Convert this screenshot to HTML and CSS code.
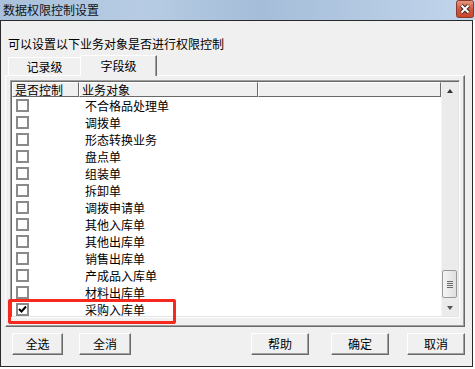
FILE: index.html
```html
<!DOCTYPE html>
<html lang="zh-CN">
<head>
    <meta charset="utf-8">
    <link rel="stylesheet" href="styles.css">
</head>
<body>
<div class="dialog">
    <div class="titlebar">
        <span class="title">数据权限控制设置</span>
        <svg class="close" width="18" height="18" viewBox="0 0 18 18">
            <defs>
                <linearGradient id="red" x1="0" y1="0" x2="0" y2="1">
                    <stop offset="0" stop-color="#e59a86"/>
                    <stop offset="0.5" stop-color="#d0583d"/>
                    <stop offset="1" stop-color="#c8452b"/>
                </linearGradient>
            </defs>
            <rect x="0.5" y="0.5" width="17" height="17" rx="2" fill="url(#red)" stroke="#8a3a2a"/>
            <path d="M5.5 5.5 L12.5 12.5 M12.5 5.5 L5.5 12.5" stroke="#3a2a2a" stroke-width="4"/>
            <path d="M5.5 5.5 L12.5 12.5 M12.5 5.5 L5.5 12.5" stroke="#fff" stroke-width="2"/>
        </svg>
    </div>
    <div class="frame">
        <div class="caption">可以设置以下业务对象是否进行权限控制</div>
        <div class="tabs">
            <div class="tab">记录级</div>
            <div class="tab active">字段级</div>
        </div>
        <div class="panel">
            <div class="list">
                <div class="grid">
                    <div class="header">
                        <div class="col c1">是否控制</div>
                        <div class="col c2">业务对象</div>
                        <div class="col c3"></div>
                    </div>
                    <div class="row"><span class="check"></span><span class="name">不合格品处理单</span></div>
                    <div class="row"><span class="check"></span><span class="name">调拨单</span></div>
                    <div class="row"><span class="check"></span><span class="name">形态转换业务</span></div>
                    <div class="row"><span class="check"></span><span class="name">盘点单</span></div>
                    <div class="row"><span class="check"></span><span class="name">组装单</span></div>
                    <div class="row"><span class="check"></span><span class="name">拆卸单</span></div>
                    <div class="row"><span class="check"></span><span class="name">调拨申请单</span></div>
                    <div class="row"><span class="check"></span><span class="name">其他入库单</span></div>
                    <div class="row"><span class="check"></span><span class="name">其他出库单</span></div>
                    <div class="row"><span class="check"></span><span class="name">销售出库单</span></div>
                    <div class="row"><span class="check"></span><span class="name">产成品入库单</span></div>
                    <div class="row"><span class="check"></span><span class="name">材料出库单</span></div>
                    <div class="row last">
                        <span class="check">
                            <svg width="9" height="9" viewBox="0 0 9 9"><path d="M1 4 L3.5 6.5 L8 1.5" fill="none" stroke="#000" stroke-width="2"/></svg>
                        </span>
                        <span class="name">采购入库单</span>
                    </div>
                </div>
                <div class="scrollbar">
                    <div class="arrow"><span class="tri up"></span></div>
                    <div class="track"></div>
                    <div class="thumb"><span class="grip"></span></div>
                    <div class="arrow"><span class="tri down"></span></div>
                </div>
            </div>
        </div>
        <div class="buttons">
            <div class="btn b-all">全选</div>
            <div class="btn b-none">全消</div>
            <div class="btn b-help">帮助</div>
            <div class="btn b-ok">确定</div>
            <div class="btn b-cancel">取消</div>
        </div>
    </div>
    <div class="highlight"></div>
</div>
</body>
</html>
```

FILE: styles.css
```css
body {
    margin: 0;
    background: #fff;
    font-family: "Noto Sans CJK SC", "Noto Sans", sans-serif;
    font-size: 12px;
    color: #000;
}
.dialog {
    position: relative;
    width: 475px;
    height: 369px;
}
.titlebar {
    height: 20px;
    display: flex;
    justify-content: space-between;
    align-items: flex-start;
    background: linear-gradient(to right, #a9c1dc 0%, #b7cce4 30%, #a5bdd9 55%, #c2d6ec 100%);
}
.title {
    padding: 2px 0 0 3px;
    line-height: 16px;
    color: #101418;
}
.close {
    margin-right: 1px;
    display: block;
}
.frame {
    box-sizing: border-box;
    width: 473px;
    height: 347px;
    border: 1px solid #2a2a2a;
    background: #f0f0f0;
}
.caption {
    margin: 16px 0 0 7px;
    line-height: 14px;
    height: 14px;
}
.tabs {
    display: flex;
    align-items: flex-end;
    height: 20px;
    margin: 4px 0 0 7px;
}
.tab {
    box-sizing: border-box;
    height: 18px;
    width: 72px;
    text-align: center;
    line-height: 17px;
    border-top: 1px solid #fff;
    border-left: 1px solid #fff;
    background: #f0f0f0;
}
.tab.active {
    position: relative;
    z-index: 1;
    width: 77px;
    height: 21px;
    margin-bottom: -1px;
    line-height: 19px;
    border-right: 1px solid #696969;
    box-shadow: inset -1px 0 #a0a0a0;
}
.panel {
    box-sizing: border-box;
    width: 460px;
    height: 252px;
    margin-left: 4px;
    padding: 4px 0 0 4px;
    border-top: 1px solid #fff;
    border-left: 1px solid #fff;
    border-right: 1px solid #696969;
    border-bottom: 1px solid #696969;
    box-shadow: inset -1px -1px #a0a0a0;
}
.list {
    box-sizing: border-box;
    display: flex;
    width: 450px;
    height: 238px;
    padding: 1px;
    border-style: solid;
    border-width: 1px;
    border-color: #a0a0a0 #fff #fff #a0a0a0;
    box-shadow: inset 1px 1px #696969, inset -1px -1px #e3e3e3;
    background: #fff;
}
.grid {
    flex: 1;
}
.header {
    display: flex;
    height: 15px;
}
.col {
    box-sizing: border-box;
    height: 15px;
    line-height: 13px;
    padding-left: 2px;
    background: #f0f0f0;
    border-top: 1px solid #fff;
    border-left: 1px solid #fff;
    border-right: 1px solid #696969;
    border-bottom: 1px solid #696969;
}
.c1 { width: 67px; }
.c2 { width: 179px; }
.c3 { flex: 1; }
.row {
    display: flex;
    align-items: center;
    height: 17px;
}
.row.last {
    height: 15px;
    align-items: flex-start;
    padding-top: 2px;
    box-sizing: border-box;
}
.check {
    box-sizing: border-box;
    width: 13px;
    height: 13px;
    margin-left: 4px;
    border: 2px solid #8a8a8a;
    background: #fff;
    display: flex;
    align-items: center;
    justify-content: center;
}
.name {
    margin-left: 56px;
    line-height: 13px;
}
.scrollbar {
    width: 16px;
    display: flex;
    flex-direction: column;
    background: #ebebeb;
    border-left: 1px solid #f4f4f4;
}
.arrow {
    height: 17px;
    display: flex;
    align-items: center;
    justify-content: center;
}
.track {
    flex: 1;
}
.tri {
    width: 0;
    height: 0;
    border-left: 3px solid transparent;
    border-right: 3px solid transparent;
}
.tri.up {
    border-bottom: 4px solid #333;
}
.tri.down {
    border-top: 4px solid #555;
}
.thumb {
    box-sizing: border-box;
    height: 28px;
    width: 15px;
    margin-bottom: 1px;
    border: 1px solid #999;
    border-radius: 2px;
    background: linear-gradient(to right, #f4f4f4, #e0e0e0);
    display: flex;
    align-items: center;
    justify-content: center;
}
.grip {
    width: 6px;
    height: 7px;
    background: repeating-linear-gradient(to bottom, #6a6a6a 0, #6a6a6a 1px, transparent 1px, transparent 2px);
}
.buttons {
    display: flex;
    margin-top: 6px;
}
.btn {
    box-sizing: border-box;
    height: 22px;
    line-height: 20px;
    text-align: center;
    background: #f0f0f0;
    border: 1px solid;
    border-color: #fff #696969 #696969 #fff;
    box-shadow: inset -1px -1px #a0a0a0;
}
.b-all { margin-left: 11px; width: 51px; }
.b-none { margin-left: 16px; width: 52px; }
.b-help { margin-left: 120px; width: 58px; }
.b-ok { margin-left: 22px; width: 58px; }
.b-cancel { margin-left: 18px; width: 58px; }
.highlight {
    position: absolute;
    left: 8px;
    top: 299px;
    width: 168px;
    height: 25px;
    box-sizing: border-box;
    border: 3px solid #f7291f;
    border-radius: 2px;
}
```
